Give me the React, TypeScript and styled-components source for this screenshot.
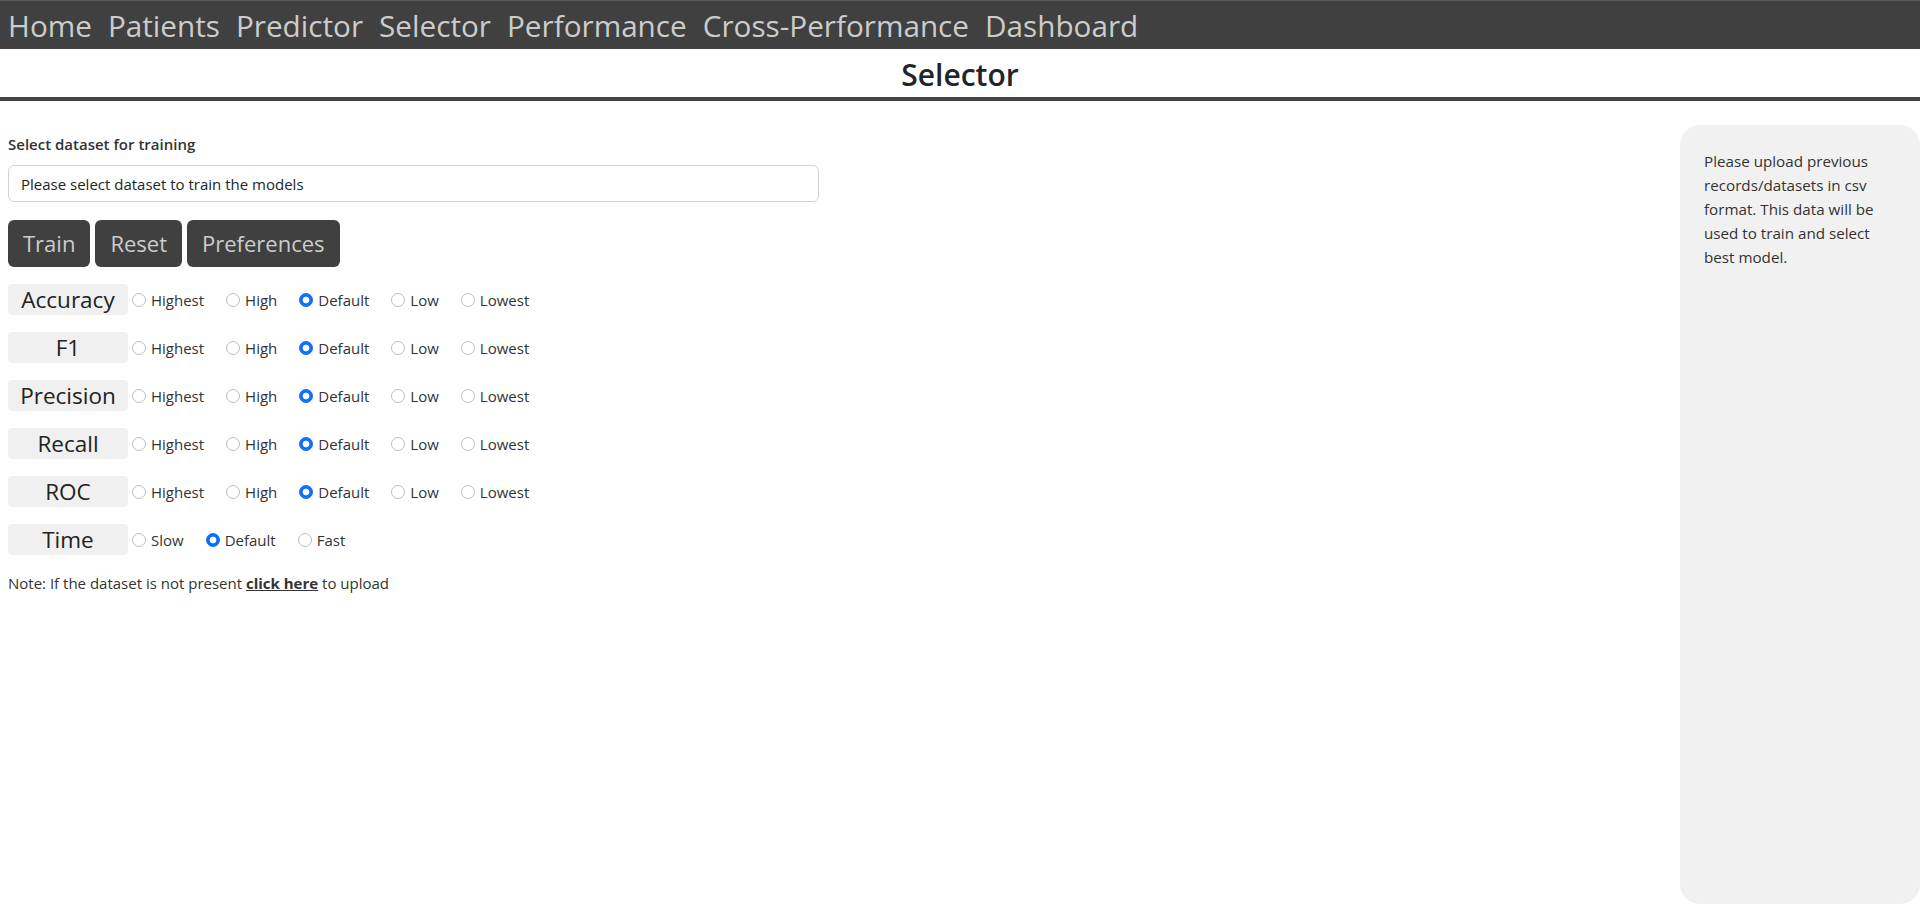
import React from "react";
import styled, { createGlobalStyle } from "styled-components";

const GlobalStyle = createGlobalStyle`
  * { box-sizing: border-box; }
  html, body { margin: 0; padding: 0; background: #ffffff; }
  body {
    font-family: "Open Sans", "Noto Sans", "Liberation Sans", Arial, sans-serif;
    color: #212529;
    overflow: hidden;
  }
`;

const NavBar = styled.nav`
  height: 49px;
  background: #404040;
  border-top: 1px solid #5a5a5a;
  display: flex;
  align-items: center;
`;

const NavLink = styled.a`
  padding: 0 8px;
  font-size: 29.7px;
  line-height: 47px;
  color: #cccccc;
  text-decoration: none;
  white-space: nowrap;
`;

const TitleBar = styled.header`
  padding: 7px 0 3px;
  border-bottom: 4px solid #444444;
  text-align: center;
`;

const Title = styled.h2`
  margin: 0;
  font-size: 30px;
  font-weight: 600;
  line-height: 38px;
  color: #212529;
`;

const Main = styled.main`
  display: grid;
  grid-template-columns: 1fr 240px;
  column-gap: 24px;
  padding-top: 24px;
`;

const LeftColumn = styled.section`
  padding: 9px 0 0 8px;
`;

const FieldLabel = styled.label`
  display: block;
  font-size: 15px;
  font-weight: 600;
  line-height: 21px;
  margin-bottom: 10px;
  color: #333333;
`;

const DatasetInput = styled.input`
  display: block;
  width: 811px;
  height: 37px;
  padding: 0 12px;
  border: 1px solid #ced4da;
  border-radius: 6px;
  font-family: inherit;
  font-size: 15px;
  color: #212529;
  background: #ffffff;
  outline: none;
`;

const ButtonRow = styled.div`
  display: flex;
  gap: 5px;
  margin: 18px 0 1px;
`;

const DarkButton = styled.button`
  height: 47px;
  padding: 0 15px;
  background: #404040;
  color: #cccccc;
  border: none;
  border-radius: 6px;
  font-family: inherit;
  font-size: 22px;
  line-height: 47px;
  cursor: pointer;
`;

const MetricRow = styled.div`
  display: flex;
  align-items: center;
  height: 31px;
  margin-top: 17px;
`;

const MetricLabel = styled.div`
  width: 120px;
  height: 31px;
  margin-right: 4px;
  background: #f0f0f0;
  border-radius: 4px;
  font-size: 22.5px;
  line-height: 31px;
  text-align: center;
  color: #222222;
`;

const RadioOption = styled.label`
  display: inline-flex;
  align-items: center;
  margin-right: 22px;
  font-size: 15px;
  color: #333333;
  cursor: pointer;
`;

const RadioInput = styled.input`
  appearance: none;
  -webkit-appearance: none;
  width: 14px;
  height: 14px;
  margin: 0 5px 0 0;
  border: 1px solid #bdbdbd;
  border-radius: 50%;
  background: #ffffff;
  &:checked {
    border-color: #0d6efd;
    background: radial-gradient(circle at center, #ffffff 0 3.1px, #0d6efd 3.7px);
  }
`;

const Note = styled.p`
  margin: 18px 0 0;
  font-size: 15px;
  line-height: 21px;
  color: #333333;
`;

const NoteLink = styled.a`
  font-weight: 700;
  color: #333333;
  text-decoration: underline;
`;

const SidePanel = styled.aside`
  height: calc(100vh - 125px);
  padding: 24px;
  background: #f1f1f1;
  border-radius: 20px;
  font-size: 15.2px;
  line-height: 24px;
  color: #333333;
`;

const navItems = [
  "Home",
  "Patients",
  "Predictor",
  "Selector",
  "Performance",
  "Cross-Performance",
  "Dashboard",
];

const levels = ["Highest", "High", "Default", "Low", "Lowest"];
const metrics: { name: string; options: string[] }[] = [
  { name: "Accuracy", options: levels },
  { name: "F1", options: levels },
  { name: "Precision", options: levels },
  { name: "Recall", options: levels },
  { name: "ROC", options: levels },
  { name: "Time", options: ["Slow", "Default", "Fast"] },
];

export default function App() {
  return (
    <>
      <GlobalStyle />
      <NavBar>
        {navItems.map((n) => (
          <NavLink key={n} href="#">
            {n}
          </NavLink>
        ))}
      </NavBar>
      <TitleBar>
        <Title>Selector</Title>
      </TitleBar>
      <Main>
        <LeftColumn>
          <FieldLabel htmlFor="dataset">Select dataset for training</FieldLabel>
          <DatasetInput
            id="dataset"
            readOnly
            value="Please select dataset to train the models"
          />
          <ButtonRow>
            <DarkButton>Train</DarkButton>
            <DarkButton>Reset</DarkButton>
            <DarkButton>Preferences</DarkButton>
          </ButtonRow>
          {metrics.map((m) => (
            <MetricRow key={m.name}>
              <MetricLabel>{m.name}</MetricLabel>
              {m.options.map((o) => (
                <RadioOption key={o}>
                  <RadioInput
                    type="radio"
                    name={m.name}
                    defaultChecked={o === "Default"}
                  />
                  {o}
                </RadioOption>
              ))}
            </MetricRow>
          ))}
          <Note>
            Note: If the dataset is not present <NoteLink href="#">click here</NoteLink> to upload
          </Note>
        </LeftColumn>
        <SidePanel>
          Please upload previous records/datasets in csv format. This data will be used to train and
          select best model.
        </SidePanel>
      </Main>
    </>
  );
}
